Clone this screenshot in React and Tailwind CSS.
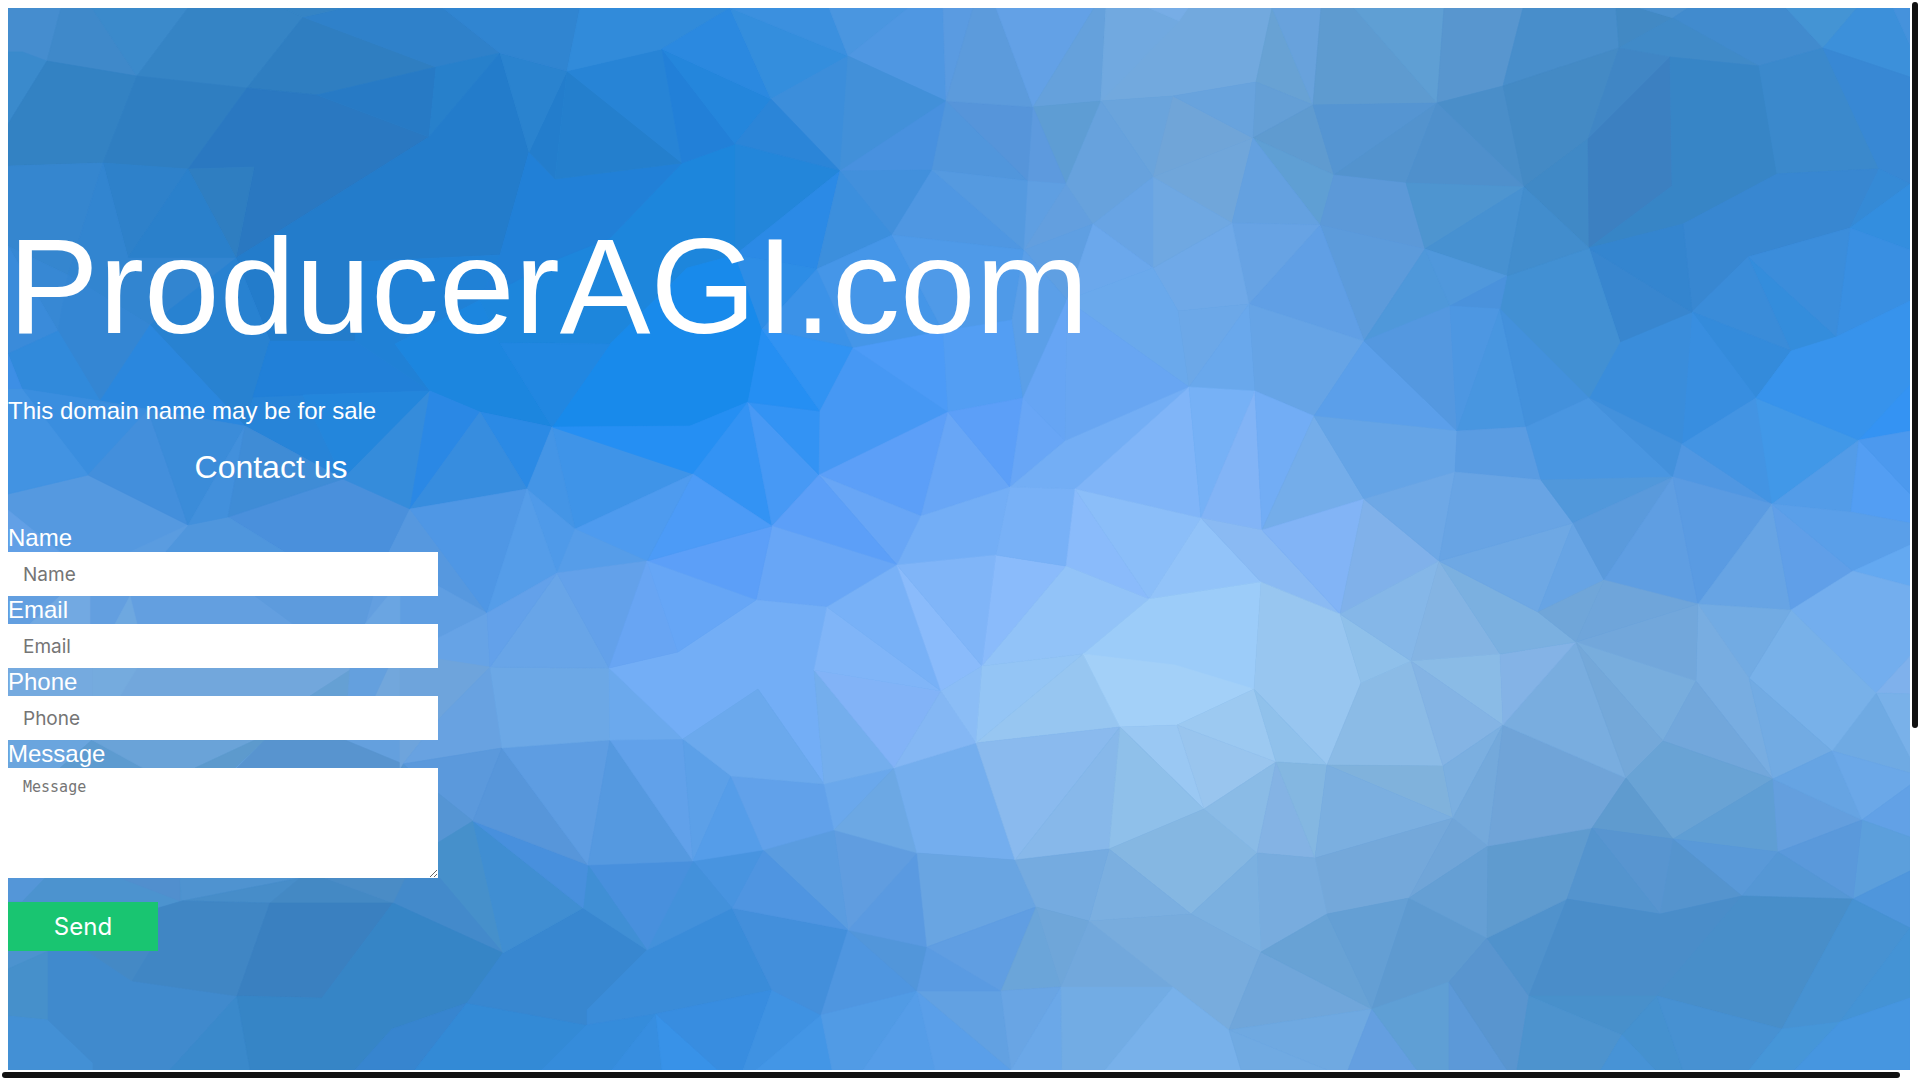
import { useState } from "react";

const FACETS = [
  // behind the form
  ["#5599e0", "8,494 88,475 188,525 228,517 343,479 410,509 490,667 403,764 8,620"],
  ["#62a0e6", "8,510 60,552 8,600"],
  ["#4a90dc", "228,517 343,479 410,509 385,560 330,580"],
  ["#4f96dd", "188,525 228,517 330,580 210,552 165,552"],
  ["#5a9ce0", "188,525 165,552 130,552"],
  ["#5698df", "410,509 487,613 438,586 385,560"],
  ["#639fe0", "8,590 438,586 438,668 8,668"],
  ["#5f9ee2", "400,586 438,586 487,613 438,638 400,640"],
  ["#66a3e6", "400,640 438,638 487,613 490,667 438,662 400,668"],
  ["#72a9e2", "60,596 90,596 90,624 30,624"],
  ["#6ea8e0", "130,596 137,624 115,624"],
  ["#5d9bdd", "255,596 373,596 365,624 293,624"],
  ["#6aa5e2", "388,596 400,596 400,624 365,624"],
  ["#75aadf", "8,660 93,660 93,700 8,700"],
  ["#72a7dc", "93,660 400,660 400,700 93,700"],
  ["#75abde", "93,668 137,668 120,696 93,696"],
  ["#65a0d4", "310,696 350,670 348,696"],
  ["#64a0de", "350,668 388,668 375,696 348,696"],
  ["#64a0de", "8,735 403,735 403,770 8,770"],
  ["#6aa5de", "8,740 92,740 60,768 8,768"],
  ["#5d9bd0", "92,740 145,768 60,768"],
  ["#6aa3d8", "92,740 255,740 195,768 143,768"],
  ["#5d9acd", "255,740 265,740 235,768 195,768"],
  ["#5894cf", "265,740 345,740 403,764 403,770 235,770"],
  ["#6ea4dc", "400,667 438,659 490,667 438,720 400,768"],
  ["#68a2e1", "438,720 490,667 502,748 403,764"],
  ["#5b99dc", "403,764 502,748 473,821 438,793"],
  ["#5595d4", "403,764 438,793 473,821 438,843 400,860"],
  ["#4690cb", "473,821 503,953 393,903 400,866"],
  ["#438acb", "438,876 503,953 393,903 405,876"],
  ["#5496d8", "8,870 60,870 22,902 8,902"],
  ["#4c93cf", "45,878 180,878 182,901 158,908 8,969 8,902 22,902"],
  ["#518fce", "120,878 180,878 180,901"],
  ["#4f93d0", "180,878 300,878 182,901"],
  ["#478dc9", "182,901 300,878 270,903"],
  ["#4489c4", "300,878 325,878 393,903 270,903"],
  ["#4a8cc6", "325,878 405,878 393,903"],
  ["#4690cb", "8,969 48,951 48,1020 8,1016"],
  ["#4390d5", "8,1016 48,1020 93,1063 93,1070 8,1070"],
  ["#408acd", "48,951 87,951 132,981 237,996 170,1070 93,1070 93,1063 48,1020"],
  ["#4489c5", "87,951 150,951 132,981"],
  ["#4086c4", "158,908 182,901 270,903 237,996 132,981 150,951"],
  ["#3a80c0", "270,903 393,903 322,998 237,996"],
  ["#3a89cb", "237,996 250,1070 170,1070"],
  ["#3685c6", "393,903 503,953 467,1003 392,1029 355,1070 250,1070 237,996 322,998"],
  ["#3785cf", "392,1029 467,1003 415,1070 355,1070"],
  ["#338ad6", "467,1003 587,1025 542,1070 415,1070"],

  // upper left
  ["#458dcf", "8,8 61,8 47,61 23,52 8,52"],
  ["#3f89ca", "61,8 92,8 137,76 47,61"],
  ["#3b8acb", "92,8 188,8 137,76"],
  ["#3584c5", "188,8 283,8 303,17 247,88 137,76"],
  ["#3a8acc", "8,52 23,52 47,61 8,124"],
  ["#3382c3", "47,61 137,76 103,163 8,166 8,124"],
  ["#2f7ec1", "137,76 247,88 188,169 103,163"],
  ["#2f7ec1", "303,17 436,67 317,95 247,88"],
  ["#2a78c1", "247,88 317,95 429,137 236,258 254,167 188,169"],
  ["#277ac5", "436,67 429,137 317,95"],
  ["#2f81ca", "303,17 343,8 443,8 500,53 436,67"],
  ["#3584c5", "283,8 343,8 303,17"],
  ["#2780cb", "436,67 500,53 429,137"],
  ["#237ccb", "236,258 429,137 500,53 529,152 500,255 355,262 355,341 270,341"],
  ["#2f7ec1", "188,169 254,167 236,258"],
  ["#3586cf", "8,166 103,163 68,275 8,246"],
  ["#2e81ca", "103,163 188,169 128,258"],
  ["#2a80cb", "188,169 236,258 128,258"],
  ["#3285d0", "103,163 128,258 236,258 150,325 68,275"],
  ["#3788d4", "8,246 68,275 58,331"],
  ["#3a8bda", "8,246 58,331 8,354"],
  ["#3486d3", "68,275 150,325 100,401 58,331"],
  ["#2882d1", "236,258 270,341 245,426 150,325"],
  ["#318adb", "8,354 58,331 100,401 22,389"],
  ["#2a87de", "150,325 245,426 100,401"],
  ["#3d8fe5", "8,354 22,389 8,389"],
  ["#2784d8", "245,426 270,341 303,395 343,479"],
  ["#2180d8", "270,341 355,341 430,391 303,395 253,397"],
  ["#2081d6", "355,262 500,255 480,300 395,344 430,391 355,341"],
  ["#1c86df", "395,344 480,300 500,343 552,427 480,412 430,391"],
  ["#2386dc", "303,395 430,391 343,479"],
  ["#358cdb", "430,391 410,509 343,479"],
  ["#2a88e5", "430,391 480,412 410,509"],
  ["#2b8ae5", "480,412 552,427 527,489"],
  ["#378ddf", "480,412 527,489 410,509"],
  ["#3a8edf", "22,389 100,401 148,410 88,475"],
  ["#4293e2", "8,389 22,389 88,475 8,494"],
  ["#438fdc", "148,410 188,525 88,475"],
  ["#3b8cd9", "100,401 245,426 188,525 148,410"],
  ["#4290dc", "245,426 228,517 188,525"],
  ["#3f8cd6", "245,426 343,479 228,517"],
  ["#4f97e5", "410,509 527,489 487,613"],

  // upper middle
  ["#1d86dc", "610,238 682,163 735,144 735,255 687,268 610,344 500,343 480,300 500,255"],
  ["#188aeb", "552,427 610,344 687,268 735,255 762,329 748,402 690,426"],
  ["#2187e1", "500,343 610,344 552,427"],
  ["#2180d7", "529,152 555,179 682,163 610,238 560,258 480,300 500,255"],
  ["#237dcc", "529,152 567,71 555,179"],
  ["#247fcd", "567,71 682,163 555,179"],
  ["#2a83cf", "500,53 567,71 529,152"],
  ["#2784d6", "567,71 662,49 682,163"],
  ["#3085d1", "443,8 580,8 567,71 500,53"],
  ["#318bda", "580,8 730,8 662,49 567,71"],
  ["#2280d8", "662,49 735,144 682,163"],
  ["#2486dc", "662,49 771,99 735,144"],
  ["#2b89e0", "730,8 771,99 662,49"],
  ["#348edd", "730,8 848,56 771,99"],
  ["#3b90df", "730,8 829,8 848,56"],
  ["#4a96e0", "829,8 908,8 848,56"],
  ["#4f97e2", "908,8 943,8 946,101 848,56"],
  ["#5a9be1", "943,8 973,8 946,101"],
  ["#3c8edb", "771,99 848,56 840,171"],
  ["#2b85d8", "771,99 840,171 735,144"],
  ["#2386da", "735,144 840,171 735,255"],
  ["#2b8ae6", "840,171 817,269 735,255"],
  ["#4290d9", "848,56 946,101 840,171"],
  ["#4891df", "946,101 932,170 840,171"],
  ["#4290dc", "840,171 932,170 892,235"],
  ["#3c8fdd", "840,171 892,235 817,269"],
  ["#2d8de6", "735,255 817,269 762,329"],
  ["#3b92e8", "817,269 853,348 762,329"],
  ["#4596e8", "817,269 892,235 943,331 853,348"],
  ["#4f97e2", "932,170 1024,250 892,235"],
  ["#4f9ae8", "892,235 1024,250 1012,320 943,331"],
  ["#5196dc", "946,101 1028,181 932,170"],
  ["#5695da", "946,101 1033,107 1028,181"],
  ["#559ae0", "932,170 1028,181 1024,250"],
  ["#3f94e8", "552,427 693,474 575,529"],
  ["#258ff3", "552,427 690,426 748,402 693,474"],
  ["#4495e6", "552,427 575,529 527,489"],
  ["#4f9ae9", "527,489 575,529 557,573"],
  ["#559de9", "527,489 557,573 487,613"],
  ["#3393f4", "748,402 772,526 693,474"],
  ["#4799f5", "748,402 819,475 772,526"],
  ["#3393f4", "748,402 820,411 819,475"],
  ["#258ff3", "762,329 820,411 748,402"],
  ["#3193f3", "762,329 853,348 820,411"],
  ["#4698f4", "820,411 853,348 948,412 819,475"],
  ["#5c9ff8", "819,475 948,412 921,516"],
  ["#68a6f6", "819,475 921,516 897,565"],
  ["#68a6f6", "948,412 1010,487 921,516"],
  ["#73aef6", "921,516 1010,487 996,555 897,565"],
  ["#4c9bf7", "853,348 943,331 948,412"],
  ["#539ef3", "943,331 1012,320 1023,398 948,412"],
  ["#5c9ff8", "948,412 1023,398 1010,487"],
  ["#5c9ff8", "772,526 819,475 897,565"],
  ["#68a6f6", "756,600 772,526 897,565 827,607"],
  ["#5c9ff8", "647,561 772,526 756,600"],
  ["#4c9bf7", "693,474 772,526 647,561"],
  ["#4e9bef", "575,529 693,474 647,561"],
  ["#569de9", "575,529 647,561 557,573"],

  // upper centre right
  ["#5c9bdc", "973,8 996,8 1033,107 946,101"],
  ["#63a1e6", "996,8 1094,8 1033,107"],
  ["#65a1dc", "1094,8 1106,8 1101,101 1033,107"],
  ["#5e9dd4", "1033,107 1101,101 1066,184"],
  ["#5d9ade", "1033,107 1066,184 1028,181"],
  ["#5f9fe2", "1028,181 1066,184 1024,250"],
  ["#639fdf", "1066,184 1093,224 1024,250"],
  ["#72a9de", "1106,8 1272,8 1256,82 1173,96 1101,101"],
  ["#71a9e0", "1106,8 1149,8 1179,21 1101,101"],
  ["#77ade6", "1149,8 1188,8 1179,21"],
  ["#6aa4dc", "1101,101 1173,96 1153,177"],
  ["#67a2dd", "1101,101 1153,177 1093,224 1066,184"],
  ["#70a5d8", "1173,96 1253,138 1153,177"],
  ["#68a3dd", "1173,96 1256,82 1253,138"],
  ["#68a2d4", "1272,8 1313,105 1256,82"],
  ["#68a2dc", "1272,8 1321,8 1313,105"],
  ["#649fd6", "1256,82 1313,105 1253,138"],
  ["#5f9bd0", "1253,138 1313,105 1334,175"],
  ["#5f9fd4", "1253,138 1334,175 1320,225"],
  ["#70a6da", "1253,138 1232,223 1153,177"],
  ["#64a1e0", "1253,138 1320,225 1232,223"],
  ["#5e9bd0", "1321,8 1354,8 1437,103 1313,105"],
  ["#5f9fd4", "1354,8 1444,8 1437,103"],
  ["#5595d2", "1313,105 1437,103 1334,175"],
  ["#5393ce", "1437,103 1406,183 1334,175"],
  ["#5c99d8", "1334,175 1406,183 1425,249 1320,225"],
  ["#5c9bdb", "1320,225 1425,249 1364,341"],
  ["#609fe5", "1320,225 1364,341 1249,304"],
  ["#67a3e4", "1232,223 1320,225 1249,304"],
  ["#6fa9e8", "1232,223 1249,304 1178,311 1153,268"],
  ["#6fa8e2", "1153,177 1232,223 1153,268"],
  ["#68a4e4", "1093,224 1153,177 1153,268"],
  ["#5f9fe2", "1024,250 1093,224 1067,300"],
  ["#5b9fe8", "1024,250 1067,300 1023,398 1012,320"],
  ["#6ba8ec", "1093,224 1153,268 1067,300"],
  ["#6aa9ec", "1067,300 1153,268 1178,311 1189,387"],
  ["#66a5f4", "1067,300 1065,441 1023,398"],
  ["#68a6f2", "1067,300 1189,387 1065,441"],
  ["#6ca8e8", "1178,311 1249,304 1189,387"],
  ["#69a8ec", "1249,304 1255,391 1189,387"],
  ["#66a4e6", "1249,304 1364,341 1314,416 1255,391"],
  ["#68a6f6", "1023,398 1065,441 1010,487"],
  ["#73aef5", "1065,441 1189,387 1075,489 1010,487"],
  ["#80b5f8", "1189,387 1201,518 1075,489"],
  ["#76b1f6", "1189,387 1255,391 1201,518"],
  ["#82b4f6", "1255,391 1262,530 1201,518"],
  ["#72adf5", "1255,391 1314,416 1262,530"],
  ["#74adea", "1314,416 1364,499 1262,530"],
  ["#5b9fea", "1364,341 1457,431 1314,416"],
  ["#65a4e6", "1314,416 1457,431 1455,472 1364,499"],
  ["#4f98da", "1425,249 1450,306 1364,341"],
  ["#5498e0", "1364,341 1450,306 1457,431"],

  // upper right
  ["#5896cf", "1444,8 1523,8 1503,86 1437,103"],
  ["#488ecb", "1523,8 1616,8 1619,48 1503,86"],
  ["#4289c4", "1616,8 1640,8 1673,18 1619,48"],
  ["#4a90cf", "1640,8 1688,8 1673,18"],
  ["#418bce", "1673,18 1688,8 1786,8 1823,48 1759,66"],
  ["#408ac8", "1619,48 1673,18 1759,66 1670,57"],
  ["#4494d4", "1786,8 1857,8 1823,48"],
  ["#3c90da", "1857,8 1893,8 1910,45 1910,77 1823,48"],
  ["#4592dc", "1893,8 1910,8 1910,45"],
  ["#4a8ec9", "1437,103 1503,86 1524,187"],
  ["#448ac5", "1503,86 1619,48 1588,139 1524,187"],
  ["#4f90cc", "1437,103 1524,187 1406,183"],
  ["#4e95d0", "1406,183 1524,187 1425,249"],
  ["#4791d1", "1425,249 1524,187 1507,276"],
  ["#4089c6", "1524,187 1588,139 1589,248"],
  ["#4086c5", "1619,48 1670,57 1588,139"],
  ["#3c80c1", "1670,57 1672,186 1589,248 1588,139"],
  ["#3785c6", "1670,57 1759,66 1777,174 1683,224 1589,248 1672,186"],
  ["#3b89cc", "1759,66 1823,48 1879,169 1777,174"],
  ["#3888d4", "1823,48 1910,77 1910,184 1879,169"],
  ["#3887d1", "1777,174 1879,169 1850,228 1748,257 1692,312 1683,224"],
  ["#358ad6", "1879,169 1910,184 1850,228"],
  ["#338edf", "1850,228 1910,184 1910,250"],
  ["#398fe2", "1850,228 1910,250 1910,301 1836,337"],
  ["#3b8ddb", "1748,257 1850,228 1836,337"],
  ["#348ddc", "1748,257 1836,337 1791,351"],
  ["#3a8cd9", "1692,312 1748,257 1791,351"],
  ["#348bdb", "1692,312 1791,351 1756,398"],
  ["#388ee0", "1692,312 1756,398 1682,444"],
  ["#3a8ddb", "1620,342 1692,312 1682,444 1589,398"],
  ["#3886cf", "1589,248 1692,312 1620,342"],
  ["#3485cf", "1589,248 1683,224 1692,312"],
  ["#4290d3", "1507,276 1589,248 1620,342 1589,398 1500,309"],
  ["#428dcd", "1524,187 1589,248 1507,276"],
  ["#5098dc", "1425,249 1507,276 1450,306"],
  ["#4a92dc", "1450,306 1507,276 1500,309"],
  ["#4d97e2", "1450,306 1500,309 1457,431"],
  ["#4896e0", "1500,309 1526,427 1457,431"],
  ["#4391dc", "1500,309 1589,398 1526,427"],
  ["#5a9ce2", "1457,431 1526,427 1541,480 1455,472"],
  ["#4996e1", "1526,427 1589,398 1673,477 1541,480"],
  ["#4391dc", "1589,398 1682,444 1673,477"],
  ["#5097e2", "1682,444 1772,504 1673,477"],
  ["#4394e3", "1682,444 1756,398 1772,504"],
  ["#4198e8", "1756,398 1859,440 1772,504"],
  ["#3793ec", "1756,398 1791,351 1836,337 1910,301 1910,431 1859,440"],
  ["#3493f3", "1859,440 1910,385 1910,431"],
  ["#539ce8", "1859,440 1851,512 1772,504"],
  ["#539ef3", "1859,440 1910,494 1910,523 1851,512"],
  ["#4c99ee", "1859,440 1910,431 1910,494"],

  // lower middle
  ["#3887d0", "503,953 583,908 647,950 587,1010 587,1025 467,1003"],
  ["#3a8cd9", "647,950 732,908 772,990 656,1014 587,1025 587,1010"],
  ["#358cdb", "587,1025 656,1014 612,1070 542,1070"],
  ["#378ee0", "656,1014 662,1070 612,1070"],
  ["#3892e8", "656,1014 718,1070 662,1070"],
  ["#388de0", "656,1014 772,990 743,1070 718,1070"],
  ["#3f92e2", "772,990 821,1015 756,1070 743,1070"],
  ["#4396e6", "821,1015 832,1070 756,1070"],
  ["#438fdb", "732,908 848,930 821,1015 772,990"],
  ["#4f96e0", "848,930 917,991 821,1015"],
  ["#519be5", "821,1015 917,991 863,1070 832,1070"],
  ["#559de8", "917,991 935,1070 863,1070"],
  ["#5a9fe9", "917,991 1011,1070 935,1070"],
  ["#62a1e2", "917,991 1001,991 1011,1070"],
  ["#5296da", "848,930 927,947 917,991"],
  ["#5a9be2", "927,947 1001,991 917,991"],
  ["#5a9ae1", "848,930 917,853 927,947"],
  ["#609de0", "834,830 917,853 848,930"],
  ["#5a9ce0", "763,850 834,830 848,930"],
  ["#4f95e1", "763,850 848,930 732,908"],
  ["#4894e0", "693,861 763,850 732,908"],
  ["#4391db", "693,861 732,908 647,950"],
  ["#4890dd", "588,865 693,861 647,950"],
  ["#408fd5", "588,865 647,950 583,908"],
  ["#408ed2", "473,821 583,908 503,953"],
  ["#4890dd", "473,821 588,865 583,908"],
  ["#5796da", "502,748 588,865 473,821"],
  ["#5e9de2", "502,748 610,740 588,865"],
  ["#5599e0", "610,740 693,861 588,865"],
  ["#61a1ea", "610,740 683,739 693,861"],
  ["#5ca0e8", "683,739 731,776 693,861"],
  ["#559de9", "731,776 763,850 693,861"],
  ["#61a1ea", "731,776 824,784 834,830 763,850"],
  ["#6aa8ec", "824,784 894,768 834,830"],
  ["#6ca8e4", "894,768 917,853 834,830"],
  ["#74aeee", "894,768 976,743 1015,860 917,853"],
  ["#69a5e2", "917,853 1015,860 1036,907 927,947"],
  ["#609ee2", "927,947 1036,907 1001,991"],
  ["#6ca8e6", "490,667 609,668 610,740 502,748"],
  ["#6ba9ed", "609,668 683,739 610,740"],
  ["#73aef6", "609,668 678,652 756,600 827,607 814,670 824,784 758,689 683,739"],
  ["#6ba9ed", "683,739 758,689 824,784 731,776"],
  ["#74aeed", "814,670 894,768 824,784"],
  ["#82b3f7", "814,670 941,691 894,768"],
  ["#80b5f8", "827,607 941,691 814,670"],
  ["#78b1f7", "827,607 897,565 941,691"],
  ["#8abbfb", "897,565 982,666 941,691"],
  ["#84b7f4", "941,691 976,743 894,768"],
  ["#8bbdf6", "941,691 982,666 976,743"],
  ["#80b5f8", "897,565 996,555 982,666"],
  ["#8abbfb", "996,555 1066,566 982,666"],
  ["#68a5e8", "557,573 609,668 490,667"],
  ["#63a1ea", "487,613 557,573 490,667"],
  ["#63a1ea", "557,573 647,561 609,668"],
  ["#68a5f3", "647,561 678,652 609,668"],
  ["#66a6f6", "647,561 756,600 678,652"],

  // bright centre
  ["#78b1f7", "1010,487 1075,489 1066,566 996,555"],
  ["#8abbfb", "1075,489 1149,599 1066,566"],
  ["#8bbef9", "1075,489 1201,518 1149,599"],
  ["#92c3f9", "1201,518 1261,582 1149,599"],
  ["#8abaf3", "1201,518 1262,530 1340,614 1261,582"],
  ["#82b4f6", "1262,530 1364,499 1340,614"],
  ["#80b1ea", "1364,499 1439,561 1340,614"],
  ["#6ea8e6", "1364,499 1455,472 1439,561"],
  ["#92c3f8", "1066,566 1149,599 1083,654 982,666"],
  ["#94c5f5", "982,666 1083,654 976,743"],
  ["#97c6f1", "1083,654 1120,727 976,743"],
  ["#9cccf9", "1149,599 1261,582 1254,689 1083,654"],
  ["#a3d0f8", "1083,654 1175,665 1254,689 1177,725 1120,727"],
  ["#98c6f0", "1261,582 1340,614 1361,683 1327,765 1254,689"],
  ["#9cc9f1", "1254,689 1276,762 1177,725"],
  ["#9ac8f3", "1120,727 1177,725 1204,809"],
  ["#99c5ee", "1177,725 1276,762 1204,809"],
  ["#90c1eb", "1254,689 1327,765 1276,762"],
  ["#8abaee", "976,743 1120,727 1015,860"],
  ["#87b8ea", "1120,727 1109,849 1015,860"],
  ["#8fc0ea", "1120,727 1204,809 1109,849"],
  ["#85b7e2", "1109,849 1204,809 1257,853 1191,914"],
  ["#8abbe6", "1204,809 1276,762 1257,853"],
  ["#84b3e4", "1276,762 1315,858 1257,853"],
  ["#84b7e1", "1276,762 1327,765 1315,858"],
  ["#8bbbe6", "1361,683 1411,661 1443,766 1327,765"],
  ["#8fc0ea", "1340,614 1411,661 1361,683"],
  ["#85b7e8", "1340,614 1439,561 1411,661"],
  ["#84b4e3", "1439,561 1500,654 1411,661"],
  ["#8abbe6", "1411,661 1500,654 1503,725"],
  ["#84b4e4", "1411,661 1503,725 1443,766"],
  ["#80b2dc", "1327,765 1443,766 1453,818"],
  ["#7bafe0", "1327,765 1453,818 1315,858"],
  ["#74a8da", "1315,858 1453,818 1409,898 1327,914"],
  ["#78acde", "1257,853 1315,858 1327,914 1261,952"],
  ["#7bb0e0", "1257,853 1261,952 1191,914"],
  ["#7bafe0", "1109,849 1191,914 1089,921"],
  ["#75abe0", "1015,860 1109,849 1089,921 1036,907"],
  ["#6ba5d9", "1036,907 1061,987 1001,991"],
  ["#6fa6d9", "1036,907 1089,921 1061,987"],
  ["#72a8dc", "1089,921 1173,987 1061,987"],
  ["#78acdd", "1089,921 1191,914 1261,952 1229,1030 1173,987"],
  ["#69a5e4", "1001,991 1061,987 1011,1070"],
  ["#6ba8e8", "1061,987 1062,1070 1011,1070"],
  ["#72ace4", "1061,987 1173,987 1105,1070 1062,1070"],
  ["#78b1ea", "1173,987 1229,1030 1241,1070 1105,1070"],
  ["#70a6da", "1261,952 1372,1009 1229,1030"],
  ["#6fa9e1", "1229,1030 1372,1009 1348,1070 1327,1070"],
  ["#70aae2", "1229,1030 1327,1070 1241,1070"],
  ["#68a2d5", "1261,952 1327,914 1372,1009"],
  ["#649fd4", "1327,914 1409,898 1372,1009"],
  ["#5e9ad0", "1409,898 1487,938 1449,982 1372,1009"],
  ["#649fe0", "1372,1009 1417,1070 1348,1070"],
  ["#5f9fd5", "1372,1009 1449,982 1449,1070 1417,1070"],

  // lower right
  ["#5c99d8", "1449,982 1507,1070 1449,1070"],
  ["#5995cf", "1449,982 1487,938 1529,996 1517,1070 1507,1070"],
  ["#5092cc", "1487,938 1567,899 1529,996"],
  ["#70a5d8", "1453,818 1488,846 1409,898"],
  ["#659fd4", "1409,898 1488,846 1487,938"],
  ["#5f9bcf", "1488,846 1592,828 1567,899 1487,938"],
  ["#7bafe0", "1503,725 1453,818 1443,766"],
  ["#74a9db", "1503,725 1488,846 1453,818"],
  ["#70a4d8", "1503,725 1626,778 1592,828 1488,846"],
  ["#79addf", "1503,725 1576,642 1626,778"],
  ["#84b3e6", "1500,654 1576,642 1503,725"],
  ["#7bb0e0", "1439,561 1538,612 1576,642 1500,654"],
  ["#6ea8e4", "1439,561 1573,523 1538,612"],
  ["#68a4e4", "1455,472 1541,480 1573,523 1439,561"],
  ["#67a4e4", "1573,523 1604,580 1538,612"],
  ["#5198db", "1541,480 1673,477 1573,523"],
  ["#5a9adc", "1573,523 1673,477 1604,580"],
  ["#5f9ee2", "1673,477 1698,604 1604,580"],
  ["#5a9be2", "1673,477 1772,504 1698,604"],
  ["#67a4e4", "1772,504 1791,610 1698,604"],
  ["#609fe8", "1772,504 1853,571 1791,610"],
  ["#5a9fe9", "1772,504 1851,512 1910,523 1910,545 1853,571"],
  ["#64a9f1", "1853,571 1910,545 1910,586"],
  ["#73aeee", "1791,610 1853,571 1910,586 1910,656 1876,693"],
  ["#7fb1ec", "1876,693 1910,656 1910,694"],
  ["#79b1e9", "1876,693 1910,694 1910,760"],
  ["#6faae3", "1876,693 1910,758 1910,773 1832,751"],
  ["#78b1e9", "1791,610 1876,693 1832,751 1749,678"],
  ["#72abe3", "1698,604 1791,610 1749,678"],
  ["#78ade1", "1698,604 1749,678 1773,779 1696,681"],
  ["#72abe3", "1749,678 1832,751 1773,779"],
  ["#72a7db", "1576,642 1698,604 1696,681"],
  ["#6fa5da", "1604,580 1698,604 1576,642"],
  ["#70a6d9", "1538,612 1604,580 1576,642"],
  ["#78addd", "1576,642 1696,681 1663,741"],
  ["#74a8d9", "1576,642 1663,741 1626,778"],
  ["#72a7db", "1696,681 1773,779 1663,741"],
  ["#69a3d5", "1626,778 1663,741 1773,779 1673,839"],
  ["#5f9bcf", "1626,778 1673,839 1592,828"],
  ["#5f9ed4", "1673,839 1773,779 1778,852"],
  ["#649fde", "1773,779 1862,820 1778,852"],
  ["#66a4e3", "1773,779 1832,751 1862,820"],
  ["#6ba8e8", "1832,751 1910,773 1910,785 1862,820"],
  ["#62a1e6", "1862,820 1910,785 1910,837"],
  ["#5c9fdc", "1862,820 1910,837 1910,871 1853,899"],
  ["#5a99db", "1778,852 1862,820 1853,899"],
  ["#5999d8", "1673,839 1778,852 1742,896"],
  ["#5597d5", "1778,852 1853,899 1742,896"],
  ["#5594ce", "1673,839 1742,896 1660,914"],
  ["#5895d0", "1592,828 1673,839 1660,914"],
  ["#5494ce", "1592,828 1660,914 1567,899"],
  ["#4f96dc", "1853,899 1910,871 1910,928"],
  ["#4a8dc9", "1567,899 1660,914 1742,896 1657,996 1529,996"],
  ["#488ec9", "1742,896 1853,899 1782,1029 1657,996"],
  ["#4792d2", "1853,899 1910,928 1840,1022 1782,1029"],
  ["#4493d5", "1910,928 1910,998 1840,1022"],
  ["#4890cb", "1529,996 1657,996 1622,1035"],
  ["#4d93ce", "1529,996 1622,1035 1601,1070 1517,1070"],
  ["#4591cf", "1622,1035 1657,996 1683,1070 1655,1070"],
  ["#4793d6", "1622,1035 1655,1070 1601,1070"],
  ["#4791d2", "1657,996 1782,1029 1749,1070 1683,1070"],
  ["#4696d8", "1782,1029 1840,1022 1795,1070 1749,1070"],
  ["#4696e0", "1840,1022 1910,998 1910,1070 1795,1070"],
];

const FIELDS = [
  { name: "name", label: "Name", type: "text" },
  { name: "email", label: "Email", type: "email" },
  { name: "phone", label: "Phone", type: "tel" },
];

function Backdrop() {
  return (
    <svg
      className="absolute inset-0 h-full w-full"
      viewBox="8 8 1902 1062"
      preserveAspectRatio="xMidYMid slice"
      aria-hidden="true">
      {FACETS.map(([fill, points], i) => (
        <polygon key={i} points={points} fill={fill} stroke={fill} strokeWidth="0.6" />
      ))}
    </svg>
  );
}

function ContactForm() {
  const [values, setValues] = useState({ name: "", email: "", phone: "", message: "" });

  const handleChange = (e) => {
    setValues({ ...values, [e.target.name]: e.target.value });
  };

  const handleSubmit = (e) => {
    e.preventDefault();
  };

  return (
    <form onSubmit={handleSubmit} className="mt-6 flex w-full max-w-[526px] flex-col items-start">
      <h2 className="mb-[39px] self-center text-[32px] leading-9">Contact us</h2>
      {FIELDS.map((field) => (
        <div key={field.name} className="w-full">
          <label htmlFor={field.name} className="block text-2xl leading-7">
            {field.label}
          </label>
          <input
            id={field.name}
            name={field.name}
            type={field.type}
            placeholder={field.label}
            value={values[field.name]}
            onChange={handleChange}
            className="block h-11 w-full max-w-[430px] bg-white px-[15px] font-['Inter',sans-serif] text-[19px] text-black placeholder:text-[#757575]"
          />
        </div>
      ))}
      <label htmlFor="message" className="block text-2xl leading-7">
        Message
      </label>
      <textarea
        id="message"
        name="message"
        placeholder="Message"
        value={values.message}
        onChange={handleChange}
        className="block h-[110px] w-full max-w-[430px] resize bg-white px-[15px] py-2.5 font-['DejaVu_Sans_Mono',monospace] text-[15px] leading-[18px] text-black placeholder:text-[#757575]"
      />
      <button
        type="submit"
        className="mt-6 h-[49px] w-[150px] bg-[#19c571] font-['Inter',sans-serif] text-2xl leading-7 text-white">
        Send
      </button>
    </form>
  );
}

export default function App() {
  return (
    <div className="grid min-h-screen grid-cols-[1fr_10px] grid-rows-[1fr_10px] bg-white font-['Liberation_Sans',Arial,sans-serif] text-white">
      <div className="flex pt-2 pl-2">
        <main className="relative flex-1 overflow-hidden bg-[#4a90dc]">
          <Backdrop />
          <div className="relative pt-[200px] pb-28">
            <h1 className="text-[136px] leading-[156px]">ProducerAGI.com</h1>
            <p className="mt-[33px] text-2xl leading-7">This domain name may be for sale</p>
            <ContactForm />
          </div>
        </main>
      </div>
      <div className="px-0.5 pt-0.5">
        <div className="h-[68%] w-1.5 rounded-full bg-[#111111]" />
      </div>
      <div className="py-0.5 pr-2.5 pl-0.5">
        <div className="h-1.5 w-full rounded-full bg-[#111111]" />
      </div>
    </div>
  );
}
